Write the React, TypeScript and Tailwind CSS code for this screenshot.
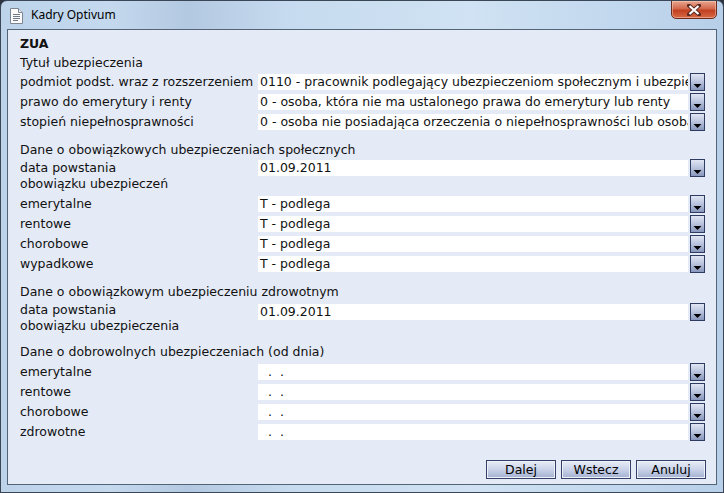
import React from "react";

const font = "font-['DejaVu_Sans',Verdana,sans-serif]";

const DropButton = () => (
  <svg width="15" height="18" viewBox="0 0 15 18" className="shrink-0">
    <defs>
      <linearGradient id="dbg" x1="0" y1="0" x2="0" y2="1">
        <stop offset="0" stopColor="#e3e8f4" />
        <stop offset="0.5" stopColor="#b9c3dd" />
        <stop offset="1" stopColor="#8594bb" />
      </linearGradient>
    </defs>
    <rect x="0.5" y="0.5" width="14" height="17" fill="url(#dbg)" stroke="#2e3c62" />
    <polygon points="3.5,11 11.5,11 7.5,15" fill="#000" />
  </svg>
);

const Field = ({ value }: { value: string }) => (
  <div className="flex items-center">
    <div className="w-[430px] h-[16px] bg-white pl-[2px] overflow-hidden whitespace-nowrap leading-[16px]">
      {value}
    </div>
    <div className="ml-[2px]">
      <DropButton />
    </div>
  </div>
);

const Row = ({ label, value, h = "h-[20px]" }: { label: string; value: string; h?: string }) => (
  <div className={`flex items-center ${h}`}>
    <div className="w-[238px] whitespace-nowrap">{label}</div>
    <Field value={value} />
  </div>
);

const DateRow = ({ l1, l2, value, fieldTop }: { l1: string; l2: string; value: string; fieldTop: string }) => (
  <div className="flex items-start h-[34px]">
    <div className="w-[238px] leading-[16px]">
      <div>{l1}</div>
      <div>{l2}</div>
    </div>
    <div className={fieldTop}>
      <div className="flex items-start">
        <div className="w-[430px] h-[16px] bg-white pl-[2px] leading-[16px] mt-[1px]">{value}</div>
        <div className="ml-[2px]">
          <DropButton />
        </div>
      </div>
    </div>
  </div>
);

const EmptyDate = () => (
  <span className="pl-[10px]">.&nbsp;&nbsp;.</span>
);

const Btn = ({ children }: { children: React.ReactNode }) => (
  <button className="w-[70px] h-[19px] border border-[#34406a] bg-[linear-gradient(#e9edf6,#c9d2e8_50%,#a3b0d0)] shadow-[inset_0_0_0_1px_#eef1f8] text-[12.5px] leading-[16px] text-black">
    {children}
  </button>
);

const DocIcon = () => (
  <svg width="13" height="16" viewBox="0 0 13 16">
    <path d="M0.5 0.5 H8.5 L12.5 4.5 V15.5 H0.5 Z" fill="#fbfbfb" stroke="#7d8794" />
    <path d="M8.5 0.5 V4.5 H12.5" fill="#e4e8ee" stroke="#7d8794" />
    <path d="M3 6.5 H10 M3 8.5 H10 M3 10.5 H10 M3 12.5 H8" stroke="#6f7a88" />
  </svg>
);

const CloseX = () => (
  <svg width="14" height="12" viewBox="0 0 14 12">
    <path d="M2 1.5 L12 10.5 M12 1.5 L2 10.5" stroke="#5a2a22" strokeWidth="4" strokeLinecap="square" />
    <path d="M2.5 2 L11.5 10 M11.5 2 L2.5 10" stroke="#ffffff" strokeWidth="2.2" />
  </svg>
);

export default function App() {
  return (
    <div className="w-[724px] h-[493px] bg-[#2b3440]">
      <div className="w-[724px] h-[493px] rounded-t-[7px] border border-[#3b4657] bg-[linear-gradient(to_right,#bcd3ea,#c4d9ee_15%,#b3c9e1_26%,#c6dbef_40%,#d0e2f3_65%,#c2d8ee_85%,#b7cfe8)] flex flex-col overflow-hidden">
        {/* title bar */}
        <div className="h-[28px] flex items-start">
          <div className="pl-[9px] pt-[7px]">
            <DocIcon />
          </div>
          <div className="pl-[8px] pt-[6px] text-[12px] leading-[16px] text-black font-['Noto_Sans',sans-serif]">
            Kadry Optivum
          </div>
          <div className="ml-auto mr-[6px] w-[46px] h-[19px] -mt-[1px] rounded-b-[5px] border border-[#6d2a1e] bg-[linear-gradient(#e9a58f,#d2694d_45%,#c2401f_55%,#d76a47)] flex items-center justify-center shadow-[inset_0_0_0_1px_rgba(255,220,200,0.45)]">
            <CloseX />
          </div>
        </div>

        {/* content panel */}
        <div className={`mx-[6px] h-[456px] border border-[#546477] bg-[#e4eaf6] pl-[12px] pr-[10px] pt-[4px] text-[12.5px] text-[#111] ${font}`}>
          <div className="h-[20px] flex items-center font-bold">ZUA</div>
          <div className="h-[18px] flex items-center">Tytuł ubezpieczenia</div>
          <Row label="podmiot podst. wraz z rozszerzeniem" value="0110 - pracownik podlegający ubezpieczeniom społecznym i ubezpieczeniu zdrowotnemu" />
          <Row label="prawo do emerytury i renty" value="0 - osoba, która nie ma ustalonego prawa do emerytury lub renty" />
          <Row label="stopień niepełnosprawności" value="0 - osoba nie posiadająca orzeczenia o niepełnosprawności lub osoba" />

          <div className="h-[20px] mt-[8px] flex items-center">Dane o obowiązkowych ubezpieczeniach społecznych</div>
          <DateRow l1="data powstania" l2="obowiązku ubezpieczeń" value="01.09.2011" fieldTop="-mt-[1px]" />
          <Row label="emerytalne" value="T - podlega" />
          <Row label="rentowe" value="T - podlega" />
          <Row label="chorobowe" value="T - podlega" />
          <Row label="wypadkowe" value="T - podlega" />

          <div className="h-[20px] mt-[8px] flex items-center">Dane o obowiązkowym ubezpieczeniu zdrowotnym</div>
          <DateRow l1="data powstania" l2="obowiązku ubezpieczenia" value="01.09.2011" fieldTop="mt-[1px]" />

          <div className="h-[19px] mt-[7px] flex items-center">Dane o dobrowolnych ubezpieczeniach (od dnia)</div>
          {["emerytalne", "rentowe", "chorobowe", "zdrowotne"].map((l) => (
            <div key={l} className="flex items-center h-[20px]">
              <div className="w-[238px]">{l}</div>
              <div className="flex items-center">
                <div className="w-[430px] h-[16px] bg-white leading-[16px]">
                  <EmptyDate />
                </div>
                <div className="ml-[2px]">
                  <DropButton />
                </div>
              </div>
            </div>
          ))}

          <div className="mt-[18px] flex justify-end gap-[5px]">
            <Btn>Dalej</Btn>
            <Btn>Wstecz</Btn>
            <Btn>Anuluj</Btn>
          </div>
        </div>
      </div>
    </div>
  );
}
